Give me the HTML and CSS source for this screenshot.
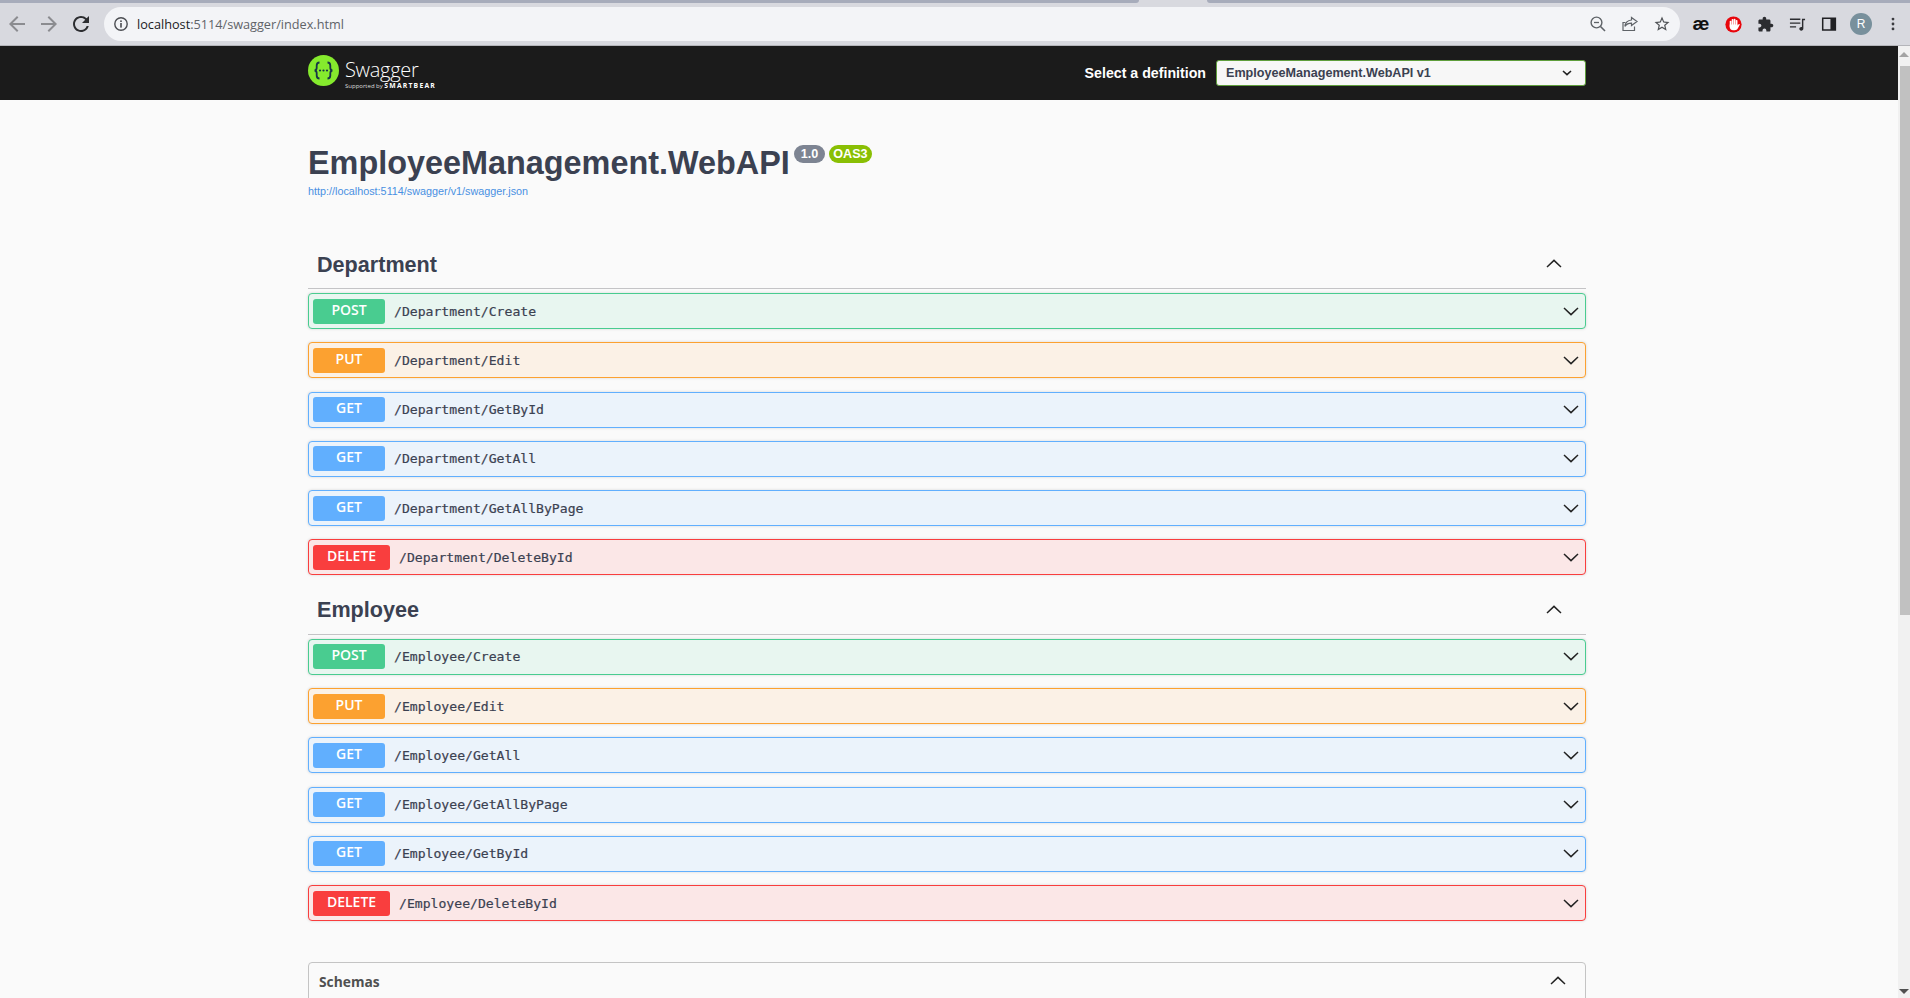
FILE: index.html
```html
<!DOCTYPE html>
<html lang="en">
<head>
    <meta charset="UTF-8">
    <meta name="viewport" content="width=device-width, initial-scale=1.0">
    <title>Swagger UI</title>
    <link rel="stylesheet" href="styles.css">
</head>
<body>
    <div class="browser">
        <div class="tabstrip"><span class="tab-left"></span><span class="tab-right"></span></div>
        <div class="toolbar">
            <svg class="nav-icon dim" viewBox="0 0 24 24"><path d="M20 11H7.83l5.59-5.59L12 4l-8 8 8 8 1.41-1.41L7.83 13H20v-2z"/></svg>
            <svg class="nav-icon dim" viewBox="0 0 24 24"><path d="M4 11h12.17l-5.59-5.59L12 4l8 8-8 8-1.41-1.41L16.17 13H4v-2z"/></svg>
            <svg class="nav-icon" viewBox="0 0 24 24"><path d="M17.65 6.35A7.958 7.958 0 0 0 12 4c-4.42 0-7.99 3.58-7.99 8s3.57 8 7.99 8c3.73 0 6.84-2.55 7.73-6h-2.08A5.99 5.99 0 0 1 12 18c-3.31 0-6-2.69-6-6s2.69-6 6-6c1.66 0 3.14.69 4.22 1.78L13 11h7V4l-2.35 2.35z"/></svg>
            <div class="omnibox">
                <svg class="info-icon" viewBox="0 0 16 16"><circle cx="8" cy="8" r="6.2" fill="none" stroke="#4b4d52" stroke-width="1.4"/><rect x="7.2" y="7" width="1.6" height="4.6" fill="#4b4d52"/><rect x="7.2" y="4.4" width="1.6" height="1.6" fill="#4b4d52"/></svg>
                <span class="url"><span class="url-host">localhost</span>:5114/swagger/index.html</span>
                <span class="omni-icons">
                    <svg class="omni-icon" viewBox="0 0 18 18"><circle cx="7.5" cy="7.5" r="5.4" fill="none" stroke="#5f6368" stroke-width="1.4"/><path d="M11.5 11.5L16 16" stroke="#5f6368" stroke-width="1.6"/><path d="M5 7.5h5" stroke="#5f6368" stroke-width="1.3"/></svg>
                    <svg class="omni-icon" viewBox="0 0 18 18" fill="none" stroke="#5f6368" stroke-width="1.2"><path d="M10.5 2.5L16 6.6l-5.5 4V8.2c-3 0-5 .9-6.6 3.2.4-3.6 2.6-6 6.6-6.4z"/><path d="M13.5 11.5V15.5H2V7.5h2.5"/></svg>
                    <svg class="omni-icon star" viewBox="0 0 24 24"><path fill="#4f5256" d="M22 9.24l-7.19-.62L12 2 9.19 8.63 2 9.24l5.46 4.73L5.82 21 12 17.27 18.18 21l-1.63-7.03L22 9.24zM12 15.4l-3.76 2.27 1-4.28-3.32-2.88 4.38-.38L12 6.1l1.71 4.04 4.38.38-3.32 2.88 1 4.28L12 15.4z"/></svg>
                </span>
            </div>
            <div class="extensions">
                <span class="ext ext-ae">æ</span>
                <span class="ext">
                    <svg class="ext-icon" viewBox="0 0 18 18"><circle cx="9" cy="9" r="8.6" fill="#e8060c"/><g fill="#fff"><rect x="5" y="5" width="1.9" height="7" rx=".9"/><rect x="7.1" y="3.2" width="1.9" height="8" rx=".9"/><rect x="9.2" y="3" width="1.9" height="8" rx=".9"/><rect x="11.3" y="4.2" width="1.9" height="7" rx=".9"/><path d="M5 9h8.2v1.2l1.2-1.4c.7-.7 1.6 0 1.1.8l-2 3.6c-.7 1.2-1.6 1.8-3 1.8H8.6C6.3 15 5 13.6 5 11.6z"/></g></svg>
                </span>
                <span class="ext">
                    <svg class="ext-icon" viewBox="0 0 24 24"><path fill="#2b2c30" d="M20.5 11H19V7c0-1.1-.9-2-2-2h-4V3.5C13 2.12 11.88 1 10.5 1S8 2.12 8 3.5V5H4c-1.1 0-1.99.9-1.99 2v3.8H3.5c1.49 0 2.7 1.21 2.7 2.7s-1.21 2.7-2.7 2.7H2V20c0 1.1.9 2 2 2h3.8v-1.5c0-1.49 1.21-2.7 2.7-2.7 1.49 0 2.7 1.21 2.7 2.7V22H17c1.1 0 2-.9 2-2v-4h1.5c1.38 0 2.5-1.12 2.5-2.5S21.88 11 20.5 11z"/></svg>
                </span>
                <span class="ext">
                    <svg class="ext-icon" viewBox="0 0 18 18"><path d="M1 3.5h11M1 7.5h11M1 11.5h6.5" stroke="#2b2c30" stroke-width="1.5" fill="none"/><path d="M13.7 3h3.3v1.5h-1.8v8.7c0 1.4-1 2.3-2.2 2.3s-2.1-.8-2.1-1.9c0-1.2 1-2 2.1-2 .3 0 .5 0 .7.1z" fill="#2b2c30"/></svg>
                </span>
                <span class="ext">
                    <svg class="ext-icon" viewBox="0 0 18 18"><path fill-rule="evenodd" fill="#202124" d="M1 1.5h15v14H1zM2.6 3.1v10.8h7.4V3.1z"/></svg>
                </span>
                <span class="ext"><span class="avatar">R</span></span>
                <span class="ext">
                    <svg class="dots" viewBox="0 0 4 16"><circle cx="2" cy="2.4" r="1.6"/><circle cx="2" cy="8" r="1.6"/><circle cx="2" cy="13.6" r="1.6"/></svg>
                </span>
            </div>
        </div>
    </div>

    <div class="viewport">
        <div class="page">
            <div class="topbar">
                <div class="topbar-inner">
                    <div class="logo">
                        <svg class="logo-mark" viewBox="0 0 31 31">
                            <circle cx="15.5" cy="15.5" r="15.5" fill="#85ea2d"/>
                            <path d="M11.5 7.5c-2.6 0-2.8 1.2-2.8 3v2.3c0 1.4-.6 2.4-2 2.7 1.4.3 2 1.3 2 2.7v2.3c0 1.8.2 3 2.8 3M19.5 7.5c2.6 0 2.8 1.2 2.8 3v2.3c0 1.4.6 2.4 2 2.7-1.4.3-2 1.3-2 2.7v2.3c0 1.8-.2 3-2.8 3" fill="none" stroke="#173647" stroke-width="1.8"/>
                            <circle cx="12" cy="15.5" r="1.1" fill="#173647"/><circle cx="15.5" cy="15.5" r="1.1" fill="#173647"/><circle cx="19" cy="15.5" r="1.1" fill="#173647"/>
                        </svg>
                        <div class="logo-text">
                            <span class="logo-name">Swagger</span>
                            <span class="logo-sub">Supported by <b>SMARTBEAR</b></span>
                        </div>
                    </div>
                    <div class="definition">
                        <label class="definition-label">Select a definition</label>
                        <div class="definition-select">
                            <span class="definition-value">EmployeeManagement.WebAPI v1</span>
                            <svg class="select-arrow" viewBox="0 0 10 6"><path d="M1 1l4 3.6L9 1" fill="none" stroke="#222" stroke-width="1.6"/></svg>
                        </div>
                    </div>
                </div>
            </div>

            <div class="content">
                <div class="info">
                    <div class="title-line">
                        <h2 class="title">EmployeeManagement.WebAPI</h2>
                        <span class="stamp stamp-version">1.0</span>
                        <span class="stamp stamp-oas">OAS3</span>
                    </div>
                    <a class="spec-link">http://localhost:5114/swagger/v1/swagger.json</a>
                </div>

                <div class="tag">
                    <h3>Department</h3>
                    <svg class="tag-arrow" viewBox="0 0 16 9"><path d="M1 8l7-6.6L15 8" fill="none" stroke="#222" stroke-width="1.5"/></svg>
                </div>
                <div class="op post"><span class="method">POST</span><span class="path">/Department/Create</span><svg class="op-arrow" viewBox="0 0 16 9"><path d="M1 1l7 6.6L15 1" fill="none" stroke="#222" stroke-width="1.5"/></svg></div>
                <div class="op put"><span class="method">PUT</span><span class="path">/Department/Edit</span><svg class="op-arrow" viewBox="0 0 16 9"><path d="M1 1l7 6.6L15 1" fill="none" stroke="#222" stroke-width="1.5"/></svg></div>
                <div class="op get"><span class="method">GET</span><span class="path">/Department/GetById</span><svg class="op-arrow" viewBox="0 0 16 9"><path d="M1 1l7 6.6L15 1" fill="none" stroke="#222" stroke-width="1.5"/></svg></div>
                <div class="op get"><span class="method">GET</span><span class="path">/Department/GetAll</span><svg class="op-arrow" viewBox="0 0 16 9"><path d="M1 1l7 6.6L15 1" fill="none" stroke="#222" stroke-width="1.5"/></svg></div>
                <div class="op get"><span class="method">GET</span><span class="path">/Department/GetAllByPage</span><svg class="op-arrow" viewBox="0 0 16 9"><path d="M1 1l7 6.6L15 1" fill="none" stroke="#222" stroke-width="1.5"/></svg></div>
                <div class="op delete"><span class="method">DELETE</span><span class="path">/Department/DeleteById</span><svg class="op-arrow" viewBox="0 0 16 9"><path d="M1 1l7 6.6L15 1" fill="none" stroke="#222" stroke-width="1.5"/></svg></div>

                <div class="tag">
                    <h3>Employee</h3>
                    <svg class="tag-arrow" viewBox="0 0 16 9"><path d="M1 8l7-6.6L15 8" fill="none" stroke="#222" stroke-width="1.5"/></svg>
                </div>
                <div class="op post"><span class="method">POST</span><span class="path">/Employee/Create</span><svg class="op-arrow" viewBox="0 0 16 9"><path d="M1 1l7 6.6L15 1" fill="none" stroke="#222" stroke-width="1.5"/></svg></div>
                <div class="op put"><span class="method">PUT</span><span class="path">/Employee/Edit</span><svg class="op-arrow" viewBox="0 0 16 9"><path d="M1 1l7 6.6L15 1" fill="none" stroke="#222" stroke-width="1.5"/></svg></div>
                <div class="op get"><span class="method">GET</span><span class="path">/Employee/GetAll</span><svg class="op-arrow" viewBox="0 0 16 9"><path d="M1 1l7 6.6L15 1" fill="none" stroke="#222" stroke-width="1.5"/></svg></div>
                <div class="op get"><span class="method">GET</span><span class="path">/Employee/GetAllByPage</span><svg class="op-arrow" viewBox="0 0 16 9"><path d="M1 1l7 6.6L15 1" fill="none" stroke="#222" stroke-width="1.5"/></svg></div>
                <div class="op get"><span class="method">GET</span><span class="path">/Employee/GetById</span><svg class="op-arrow" viewBox="0 0 16 9"><path d="M1 1l7 6.6L15 1" fill="none" stroke="#222" stroke-width="1.5"/></svg></div>
                <div class="op delete"><span class="method">DELETE</span><span class="path">/Employee/DeleteById</span><svg class="op-arrow" viewBox="0 0 16 9"><path d="M1 1l7 6.6L15 1" fill="none" stroke="#222" stroke-width="1.5"/></svg></div>

                <div class="schemas">
                    <span>Schemas</span>
                    <svg class="tag-arrow" viewBox="0 0 16 9"><path d="M1 8l7-6.6L15 8" fill="none" stroke="#222" stroke-width="1.5"/></svg>
                </div>
            </div>
        </div>
        <div class="scrollbar">
            <span class="scroll-up"></span>
            <span class="scroll-thumb"></span>
            <span class="scroll-down"></span>
        </div>
    </div>
</body>
</html>
```

FILE: styles.css
```css
* {
    box-sizing: border-box;
}
html, body {
    margin: 0;
    height: 998px;
    overflow: hidden;
}
body {
    font-family: "Liberation Sans", Arial, sans-serif;
    background-color: #fafafa;
    color: #3b4151;
}

/* browser chrome */
.browser {
    height: 46px;
    background-color: #d8d9df;
    border-bottom: 1px solid #b4b5ba;
}
.tabstrip {
    display: flex;
    justify-content: space-between;
    height: 3px;
}
.tab-left, .tab-right {
    background-color: #a7acbb;
}
.tab-left {
    width: 1139px;
    border-bottom-right-radius: 3px;
}
.tab-right {
    width: 703px;
    border-bottom-left-radius: 3px;
}
.toolbar {
    display: flex;
    align-items: center;
    height: 42px;
    padding: 4px 0 4px 5px;
}
.nav-icon {
    width: 24px;
    height: 24px;
    margin-right: 8px;
    fill: #2c2d30;
}
.nav-icon.dim {
    fill: #8b8c90;
}
.omnibox {
    display: flex;
    align-items: center;
    width: 1576px;
    height: 34px;
    margin-left: 3px;
    padding-left: 9px;
    border-radius: 17px;
    background-color: #f3f4f7;
}
.info-icon {
    width: 16px;
    height: 16px;
    margin-right: 8px;
}
.url {
    font-family: "Open Sans", sans-serif;
    font-size: 12.7px;
    color: #5f6368;
}
.url-host {
    color: #202124;
}
.omni-icons {
    display: flex;
    gap: 14px;
    margin-left: auto;
    margin-right: 9px;
}
.omni-icon {
    width: 18px;
    height: 18px;
}
.extensions {
    display: flex;
    align-items: center;
    margin-left: 5px;
}
.ext {
    display: flex;
    align-items: center;
    justify-content: center;
    width: 32px;
    height: 28px;
}
.ext-ae {
    font-size: 19px;
    font-weight: bold;
    color: #111;
}
.ext-icon {
    width: 17px;
    height: 17px;
}
.avatar {
    display: flex;
    align-items: center;
    justify-content: center;
    width: 22px;
    height: 22px;
    border-radius: 50%;
    background-color: #78909c;
    color: #fff;
    font-size: 12px;
}
.dots {
    width: 4px;
    height: 14px;
    fill: #3b3c40;
}

/* page + scrollbar */
.viewport {
    display: flex;
    height: 952px;
}
.page {
    flex: 1;
    overflow: hidden;
}
.scrollbar {
    display: flex;
    flex-direction: column;
    align-items: flex-end;
    width: 12px;
    background-color: #f1f1f1;
}
.scroll-up {
    width: 0;
    margin: 6px 1px 9px 0;
    border-left: 5px solid transparent;
    border-right: 5px solid transparent;
    border-bottom: 5px solid #a3a3a3;
}
.scroll-thumb {
    width: 10px;
    height: 549px;
    background-color: #c1c1c1;
}
.scroll-down {
    width: 0;
    margin: auto 1px 4px 0;
    border-left: 5px solid transparent;
    border-right: 5px solid transparent;
    border-top: 5px solid #505050;
}

/* swagger top bar */
.topbar {
    height: 54px;
    background-color: #1b1b1b;
}
.topbar-inner {
    display: flex;
    align-items: center;
    justify-content: space-between;
    width: 1278px;
    height: 54px;
    margin-left: 308px;
}
.logo {
    display: flex;
    align-items: center;
    gap: 6px;
    margin-top: -5px;
    color: #fff;
}
.logo-mark {
    width: 31px;
    height: 31px;
}
.logo-text {
    display: flex;
    flex-direction: column;
    padding-top: 7px;
}
.logo-name {
    font-family: "Open Sans", sans-serif;
    font-weight: 300;
    font-size: 20px;
    line-height: 24px;
    letter-spacing: -0.3px;
}
.logo-sub {
    font-family: "Open Sans", sans-serif;
    font-size: 6px;
    line-height: 8px;
    white-space: nowrap;
    color: #ddd;
}
.logo-sub b {
    font-size: 6.8px;
    letter-spacing: 1.2px;
    color: #fff;
}
.definition {
    display: flex;
    align-items: center;
    gap: 10px;
}
.definition-label {
    font-size: 14.2px;
    font-weight: bold;
    color: #fff;
}
.definition-select {
    display: flex;
    align-items: center;
    justify-content: space-between;
    width: 370px;
    height: 26px;
    padding: 0 13px 0 9px;
    border: 1px solid #5f9e3c;
    border-radius: 3px;
    background-color: #f7f7f7;
    font-size: 12.6px;
    font-weight: bold;
    color: #3b4151;
}
.definition-value {
    margin-top: -1px;
}
.select-arrow {
    width: 10px;
    height: 6px;
}

/* main column */
.content {
    width: 1278px;
    margin-left: 308px;
}
.info {
    height: 145px;
    padding-top: 45px;
}
.title-line {
    display: flex;
    align-items: flex-start;
    height: 37px;
}
.title {
    margin: 0;
    font-size: 32.4px;
    line-height: 37px;
    font-weight: bold;
}
.stamp {
    height: 18px;
    padding: 0 7px;
    border-radius: 9px;
    font-size: 12.6px;
    line-height: 18px;
    font-weight: bold;
    color: #fff;
}
.stamp-version {
    margin-left: 4px;
    background-color: #7d8492;
}
.stamp-oas {
    margin-left: 4px;
    padding: 0 4px;
    background-color: #89bf04;
}
.spec-link {
    display: block;
    margin-top: 2px;
    font-size: 10.8px;
    line-height: 14px;
    color: #4990e2;
}
.tag {
    display: flex;
    align-items: center;
    justify-content: space-between;
    height: 44px;
    padding: 0 19px 4px 9px;
    margin-bottom: 4px;
    border-bottom: 1px solid #c4c4c6;
}
.op + .tag {
    margin-top: 15.3px;
}
.tag h3 {
    margin: 0;
    font-size: 21.6px;
    font-weight: bold;
}
.tag-arrow {
    width: 16px;
    height: 9px;
    margin-right: 5px;
    margin-top: -2px;
}
.op {
    display: flex;
    align-items: center;
    height: 36px;
    margin-bottom: 13.3px;
    padding: 0 6px 0 4px;
    border: 1px solid;
    border-radius: 4px;
    box-shadow: 0 0 3px rgba(0, 0, 0, 0.15);
}
.method {
    min-width: 72px;
    height: 25px;
    padding: 0 7px;
    margin-right: 9px;
    border-radius: 3px;
    font-family: "Open Sans", sans-serif;
    font-size: 14px;
    font-weight: 600;
    line-height: 22px;
    text-align: center;
    color: #fff;
}
.delete .method {
    min-width: 77px;
}
.path {
    font-family: "DejaVu Sans Mono", monospace;
    font-size: 13.12px;
    color: #3b4151;
    -webkit-text-stroke: 0.2px #3b4151;
}
.op-arrow {
    width: 16px;
    height: 9px;
    margin-left: auto;
}
.post {
    border-color: #49cc90;
    background-color: #e8f6f0;
}
.post .method {
    background-color: #49cc90;
}
.put {
    border-color: #fca130;
    background-color: #fbf1e6;
}
.put .method {
    background-color: #fca130;
}
.get {
    border-color: #61affe;
    background-color: #ebf3fb;
}
.get .method {
    background-color: #61affe;
}
.delete {
    border-color: #f93e3e;
    background-color: #fbe7e7;
}
.delete .method {
    background-color: #f93e3e;
}
.schemas {
    display: flex;
    align-items: center;
    justify-content: space-between;
    height: 60px;
    margin-top: 41px;
    padding: 0 14px 22px 10px;
    border: 1px solid #c4c4c4;
    border-radius: 4px;
    font-family: "Open Sans", sans-serif;
    font-size: 13.8px;
    font-weight: 700;
    color: #505050;
}
```
